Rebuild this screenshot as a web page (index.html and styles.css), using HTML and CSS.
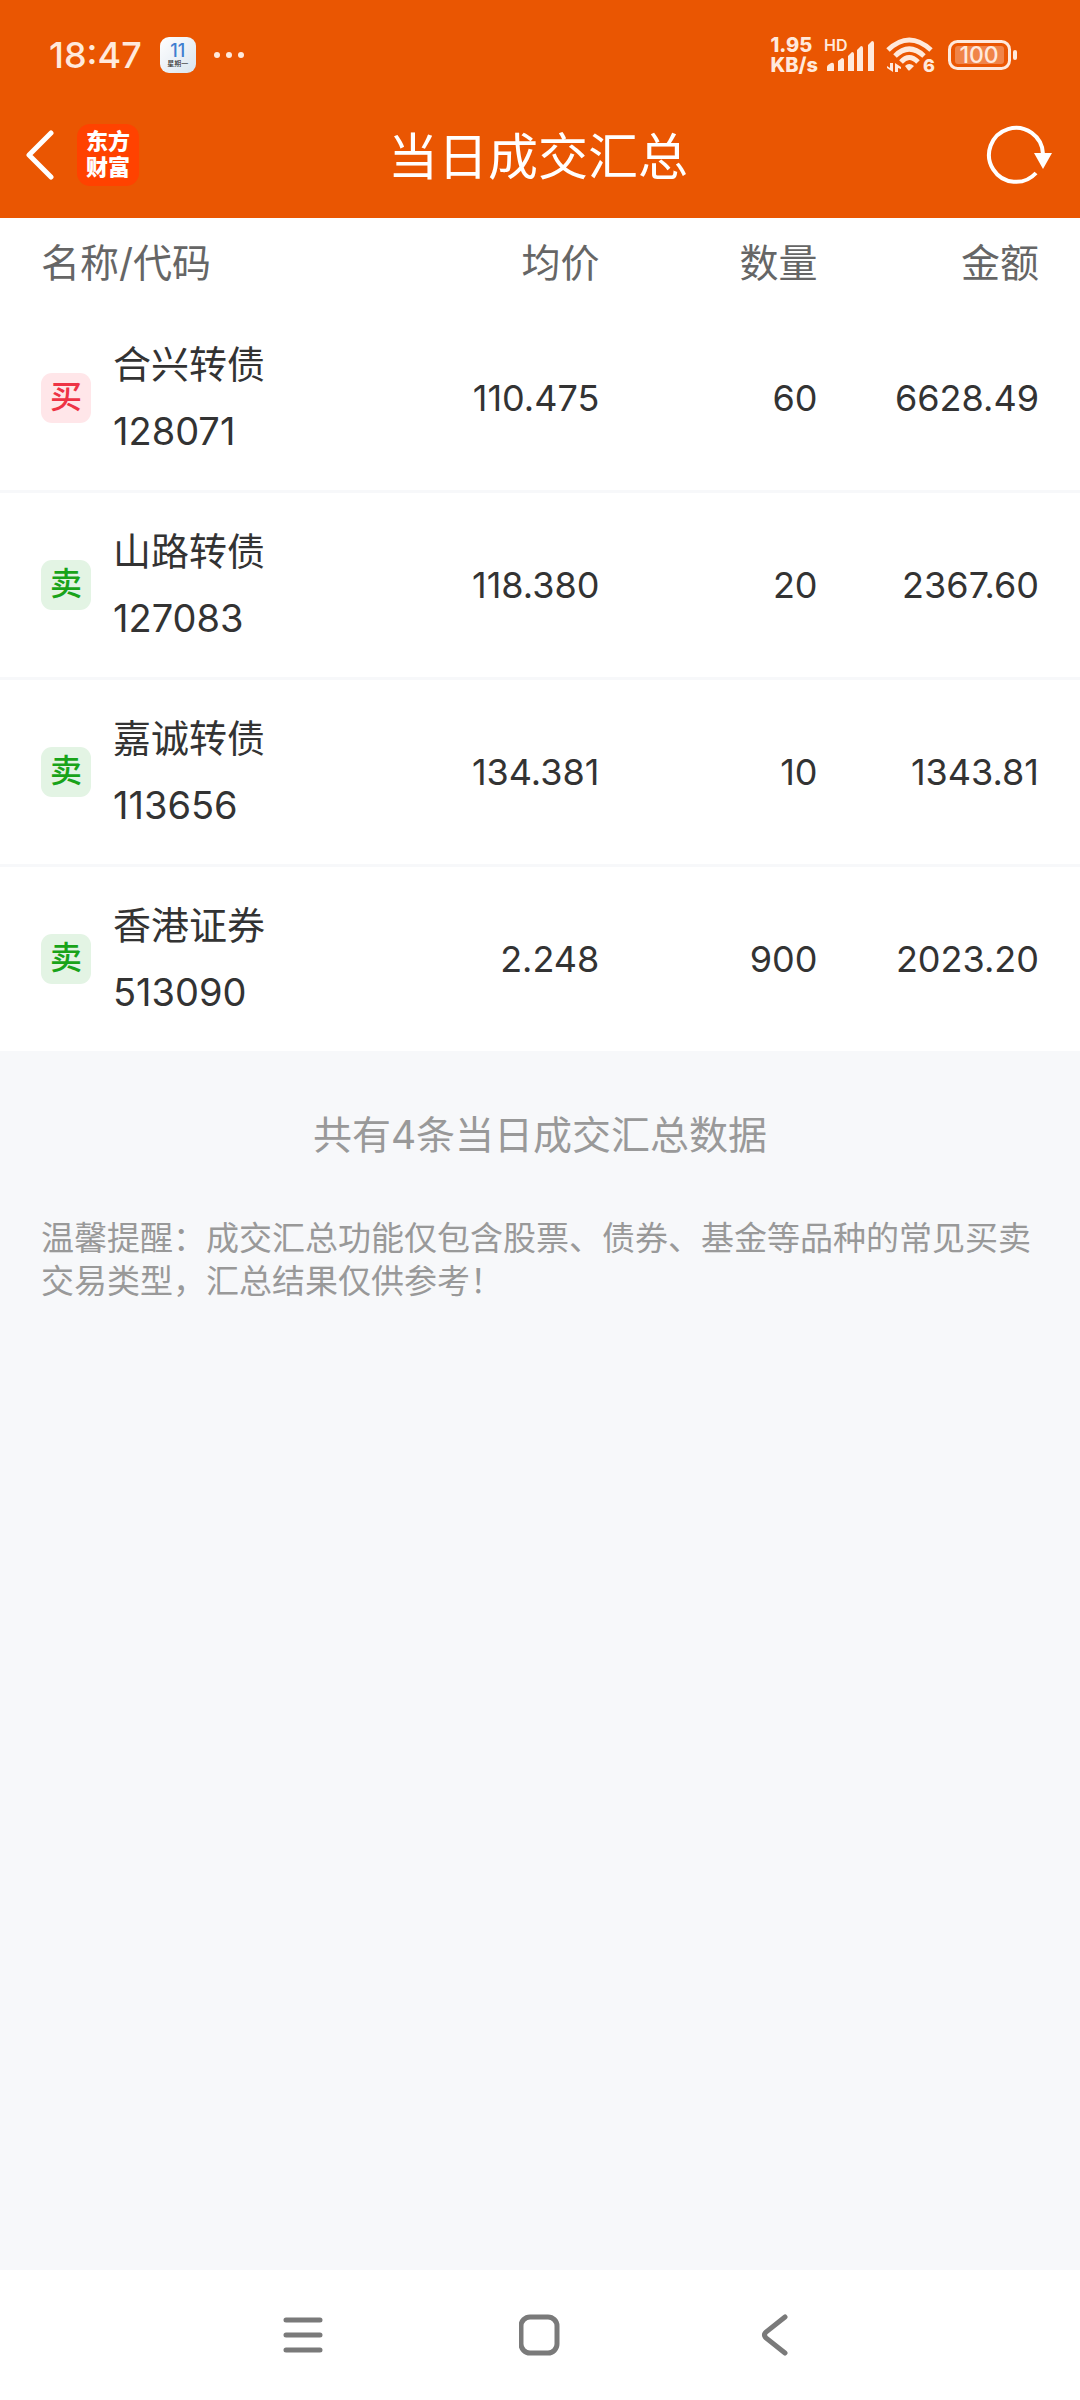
FILE: index.html
```html
<!DOCTYPE html>
<html lang="zh-CN">
<head>
    <meta charset="UTF-8">
    <meta name="viewport" content="width=device-width, initial-scale=1.0">
    <title>当日成交汇总</title>
    <link rel="stylesheet" href="styles.css">
</head>
<body>

    <header class="top">
        <div class="status">
            <span class="time">18:47</span>
            <span class="calendar"><b>11</b><small>星期一</small></span>
            <svg class="dots" width="32" height="8" viewBox="0 0 32 8">
                <circle cx="4" cy="4" r="3"/><circle cx="16" cy="4" r="3"/><circle cx="28" cy="4" r="3"/>
            </svg>

            <div class="speed"><span>1.95</span><span>KB/s</span></div>

            <!-- 信号 -->
            <svg class="signal" width="52" height="36" viewBox="0 0 52 36">
                <text x="0" y="14">HD</text>
                <path d="M3 34V30Q3 29 4 28L7 26Q10 25 10 28V34Z"/>
                <path d="M14 34V24L18 21Q20 21 20 23V34Z"/>
                <path d="M24 34V19L28 15Q30 15 30 17V34Z"/>
                <path d="M33 34V13L37 9Q39 9 39 11V34Z"/>
                <path d="M44 34V8L48 4Q50 4 50 6V34Z"/>
            </svg>

            <!-- wifi -->
            <svg class="wifi" width="50" height="38" viewBox="0 0 50 38">
                <path class="arc" d="M3 14Q24 -6 46 14"/>
                <path class="arc" d="M10 20Q24 6 39 20"/>
                <path class="arc" d="M16 26Q24 17 33 26"/>
                <path d="M20 30Q24 26 29 30L25 34Q24 35 23 34Z"/>
                <path d="M5 27H8V36L2 32V30L5 32ZM10 36V27L16 31V33L13 32V36Z"/>
                <text x="38" y="36">6</text>
            </svg>

            <!-- 电池 -->
            <svg class="battery" width="70" height="30" viewBox="0 0 70 30">
                <rect class="shell" x="1.5" y="1.5" width="60" height="27" rx="8"/>
                <rect class="level" x="7" y="6" width="49" height="18" rx="3"/>
                <rect x="65" y="10" width="4" height="10" rx="2"/>
                <text x="31" y="23">100</text>
            </svg>
        </div>

        <div class="bar">
            <div class="bar-left">
                <button class="back" type="button" aria-label="返回">
                    <svg width="30" height="52" viewBox="0 0 30 52"><path d="M27 4L5 26L27 48"/></svg>
                </button>
                <span class="logo">东方<br>财富</span>
            </div>
            <h1>当日成交汇总</h1>
            <button class="refresh" type="button" aria-label="刷新">
                <svg width="66" height="60" viewBox="0 0 66 60">
                    <path class="ring" d="M57 29A27 27 0 1 0 50 48"/>
                    <path class="arrow" d="M48 28H66L57 44Z"/>
                </svg>
            </button>
        </div>
    </header>

    <main>
        <table class="deals">
            <thead>
                <tr>
                    <th class="name">名称/代码</th>
                    <th class="price">均价</th>
                    <th class="count">数量</th>
                    <th class="amount">金额</th>
                </tr>
            </thead>
            <tbody>
                <tr>
                    <td><div class="stock"><span class="tag buy">买</span><p>合兴转债<br>128071</p></div></td>
                    <td>110.475</td>
                    <td>60</td>
                    <td>6628.49</td>
                </tr>
                <tr>
                    <td><div class="stock"><span class="tag sell">卖</span><p>山路转债<br>127083</p></div></td>
                    <td>118.380</td>
                    <td>20</td>
                    <td>2367.60</td>
                </tr>
                <tr>
                    <td><div class="stock"><span class="tag sell">卖</span><p>嘉诚转债<br>113656</p></div></td>
                    <td>134.381</td>
                    <td>10</td>
                    <td>1343.81</td>
                </tr>
                <tr>
                    <td><div class="stock"><span class="tag sell">卖</span><p>香港证券<br>513090</p></div></td>
                    <td>2.248</td>
                    <td>900</td>
                    <td>2023.20</td>
                </tr>
            </tbody>
        </table>

        <p class="total">共有4条当日成交汇总数据</p>
        <p class="notice">温馨提醒：成交汇总功能仅包含股票、债券、基金等品种的常见买卖交易类型，汇总结果仅供参考！</p>
    </main>

    <nav class="keys">
        <button type="button" aria-label="菜单">
            <svg width="42" height="42" viewBox="0 0 42 42"><path d="M3 6H37M3 21H37M3 36H37"/></svg>
        </button>
        <button type="button" aria-label="主页">
            <svg width="42" height="42" viewBox="0 0 42 42"><rect x="2" y="3" width="36" height="36" rx="9"/></svg>
        </button>
        <button type="button" aria-label="返回">
            <svg width="42" height="42" viewBox="0 0 42 42"><path d="M30 3L11 18Q8 21 11 24L30 39"/></svg>
        </button>
    </nav>

</body>
</html>
```

FILE: styles.css
```css
*{
    box-sizing:border-box;
}

body{
    margin:0;
    min-height:100vh;
    display:flex;
    flex-direction:column;
    background-color:#f7f8fa;
    color:#333;
    font-family:Inter, "Noto Sans CJK SC", sans-serif;
    font-size:38px;
}

h1, p{
    margin:0;
    font-weight:normal;
}

button{
    border:none;
    padding:0;
    background:none;
    display:flex;
    align-items:center;
    justify-content:center;
}

/* 顶部 */
.top{
    background-color:#ea5602;
    color:white;
}

.status{
    height:92px;
    padding:17px 62px 0 49px;
    display:flex;
    align-items:center;
    color:#ffe9dc;
    fill:#ffe9dc;
}

.status svg{
    overflow:visible;
}

.time{
    font-size:36px;
    font-weight:500;
}

.calendar{
    width:36px;
    height:36px;
    margin-left:18px;
    border-radius:9px;
    background:linear-gradient(135deg, white, #d9e4ee);
    display:flex;
    flex-direction:column;
    align-items:center;
    justify-content:center;
}

.calendar b{
    color:#3f7fd0;
    font-size:18px;
    font-weight:500;
    line-height:18px;
}

.calendar small{
    color:#222;
    font-size:7px;
    line-height:8px;
}

.dots{
    margin-left:17px;
}

.speed{
    margin-left:auto;
    display:flex;
    flex-direction:column;
    font-size:20px;
    font-weight:800;
    line-height:20px;
}

.signal{
    margin-left:6px;
}

.signal text{
    font-size:16px;
    font-weight:600;
}

.wifi{
    margin-left:9px;
}

.wifi text{
    font-size:18px;
    font-weight:800;
}

.arc{
    fill:none;
    stroke:#ffe9dc;
    stroke-width:5;
}

.battery{
    margin-left:13px;
}

.battery text{
    font-size:23px;
    font-weight:500;
    text-anchor:middle;
}

.shell{
    fill:none;
    stroke:#ffe9dc;
    stroke-width:3;
}

.level{
    fill:#f08449;
}

.bar{
    height:126px;
    padding:0 28px 0 24px;
    display:grid;
    grid-template-columns:1fr auto 1fr;
    align-items:center;
}

.bar-left{
    display:flex;
    align-items:center;
    gap:23px;
}

.back path{
    fill:none;
    stroke:white;
    stroke-width:5;
    stroke-linecap:round;
    stroke-linejoin:round;
}

.logo{
    width:62px;
    height:62px;
    border-radius:13px;
    background-color:#ff4200;
    font-size:22px;
    font-weight:900;
    line-height:26px;
    padding-top:4px;
    text-align:center;
}

.bar h1{
    padding-bottom:4px;
    font-size:50px;
}

.refresh{
    justify-self:end;
}

.ring{
    fill:none;
    stroke:white;
    stroke-width:4;
}

.arrow{
    fill:white;
}

/* 成交列表 */
main{
    flex:1;
}

.deals{
    width:100%;
    table-layout:fixed;
    border-collapse:separate;
    border-spacing:0;
    background-color:white;
}

.deals th{
    height:88px;
    padding:0 0 4px;
    color:#666;
    font-size:39px;
    font-weight:normal;
    text-align:right;
}

.deals td{
    height:187px;
    padding:0;
    border-bottom:3px solid #f7f8fa;
    font-size:36px;
    text-align:right;
}

.deals tr:last-child td{
    height:184px;
    border-bottom:none;
}

.deals th:first-child,
.deals td:first-child{
    padding-left:41px;
    text-align:left;
}

.deals th:last-child,
.deals td:last-child{
    padding-right:41px;
}

.name{
    width:35.5%;
}

.price{
    width:20%;
}

.count{
    width:20.2%;
}

.stock{
    display:flex;
    align-items:center;
    gap:22px;
}

.stock p{
    font-size:38px;
    line-height:67px;
}

.tag{
    width:50px;
    height:50px;
    border-radius:11px;
    font-size:32px;
    font-weight:500;
    line-height:48px;
    text-align:center;
}

.buy{
    background-color:#ffe6e9;
    color:#ee3345;
}

.sell{
    background-color:#e3f4e4;
    color:#19a319;
}

/* 底部说明 */
.total{
    padding-top:55px;
    color:#999;
    font-size:39px;
    line-height:58px;
    text-align:center;
}

.notice{
    padding:53px 41px;
    color:#999;
    font-size:33px;
    line-height:43px;
}

.keys{
    height:130px;
    background-color:white;
    display:flex;
    align-items:center;
    justify-content:center;
    gap:194px;
}

.keys svg{
    fill:none;
    stroke:#7a7a7a;
    stroke-width:5;
    stroke-linecap:round;
}
```
